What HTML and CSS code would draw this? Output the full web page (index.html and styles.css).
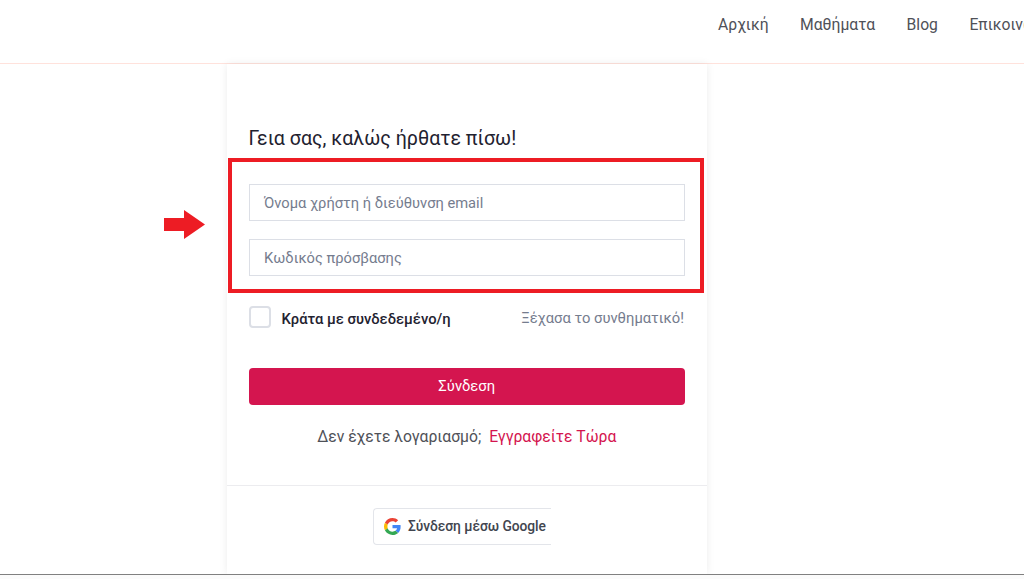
FILE: index.html
```html
<!DOCTYPE html>
<html lang="el">
<head>
<meta charset="utf-8">
<title>Σύνδεση</title>
<link rel="stylesheet" href="styles.css">
</head>
<body>
<header class="topbar">
  <nav class="nav">
    <a class="nav-link">Αρχική</a>
    <a class="nav-link">Μαθήματα</a>
    <a class="nav-link">Blog</a>
    <a class="nav-link">Επικοινωνία</a>
  </nav>
</header>
<main class="stage">
  <section class="card">
    <div class="form-area">
      <h1 class="title">Γεια σας, καλώς ήρθατε πίσω!</h1>
      <div class="fields">
        <div class="field">Όνομα χρήστη ή διεύθυνση email</div>
        <div class="field">Κωδικός πρόσβασης</div>
      </div>
      <div class="options">
        <label class="remember"><span class="check"></span><span class="remember-text">Κράτα με συνδεδεμένο/η</span></label>
        <a class="forgot">Ξέχασα το συνθηματικό!</a>
      </div>
      <div class="submit">Σύνδεση</div>
      <p class="signup">Δεν έχετε λογαριασμό; <a class="signup-link">Εγγραφείτε Τώρα</a></p>
    </div>
    <div class="social">
      <div class="google">
        <svg class="g-icon" viewBox="0 0 48 48" width="17" height="17" aria-hidden="true">
          <path fill="#EA4335" d="M24 9.5c3.5 0 6.7 1.3 9.1 3.5l6.8-6.8C35.800 2.400 30.200 0 24 0 14.600 0 6.500 5.400 2.600 13.200l7.900 6.200C12.400 13.600 17.700 9.500 24 9.500z"/>
          <path fill="#4285F4" d="M46.900 24.500c0-1.600-.1-3.100-.4-4.500H24v9h12.900c-.6 3-2.200 5.500-4.700 7.200l7.700 6c4.500-4.200 7-10.300 7-17.700z"/>
          <path fill="#FBBC05" d="M10.500 28.600c-.5-1.400-.8-3-.8-4.600s.3-3.200.8-4.600l-7.900-6.200C.9 16.500 0 20.100 0 24s.9 7.500 2.600 10.800l7.900-6.200z"/>
          <path fill="#34A853" d="M24 48c6.500 0 11.900-2.100 15.900-5.800l-7.700-6c-2.200 1.400-4.900 2.300-8.200 2.300-6.300 0-11.600-4.100-13.500-9.900l-7.900 6.200C6.500 42.600 14.600 48 24 48z"/>
        </svg>
        <span>Σύνδεση μέσω Google</span>
      </div>
    </div>
  </section>
</main>
<footer class="edge"></footer>
<div class="highlight"></div>
<svg class="arrow" viewBox="0 0 41 29" width="41" height="29" aria-hidden="true">
  <path fill="#ed1c24" d="M0 8H20V0L41 14.500 20 29V21H0Z"/>
</svg>
</body>
</html>
```
FILE: styles.css
```css
* { box-sizing: border-box; }
html, body { margin: 0; height: 100%; }
body {
  width: 1024px;
  height: 579px;
  overflow: hidden;
  position: relative;
  background: #fff;
  font-family: Roboto, "Noto Sans", sans-serif;
  display: flex;
  flex-direction: column;
}
.topbar {
  height: 64px;
  flex: none;
  border-bottom: 1px solid #ffe2dc;
  overflow: hidden;
}
.nav {
  display: flex;
  gap: 31.500px;
  padding: 14.500px 0 0 718px;
  width: 1200px;
}
.nav-link {
  font-size: 15.700px;
  line-height: 20px;
  color: #4f5158;
  white-space: nowrap;
}
.stage {
  flex: 1;
  min-height: 0;
  padding-left: 227px;
}
.card {
  width: 480px;
  height: 100%;
  background: #fff;
  box-shadow: 0 0 8px rgba(0, 0, 0, .08);
  display: flex;
  flex-direction: column;
}
.form-area {
  height: 422px;
  flex: none;
  padding: 61.500px 22px 0 21.500px;
  border-bottom: 1px solid #ececef;
}
.title {
  margin: 0;
  font-size: 19.600px;
  line-height: 26px;
  font-weight: 400;
  color: #1f2230;
}
.fields {
  margin-top: 32.500px;
  display: flex;
  flex-direction: column;
  gap: 18px;
}
.field {
  height: 37px;
  border: 1px solid #dcdfe6;
  padding: 0 14.500px;
  font-size: 14.700px;
  line-height: 36px;
  color: #757c8e;
}
.options {
  margin-top: 30px;
  height: 22px;
  display: flex;
  justify-content: space-between;
  align-items: center;
  padding-right: 1px;
}
.remember {
  display: flex;
  align-items: center;
  gap: 11px;
  font-size: 14.750px;
  font-weight: 500;
  color: #1f2230;
}
.remember-text { padding-top: 4px; }
.check {
  width: 22px;
  height: 22px;
  border: 2px solid #dcdfe6;
  border-radius: 4px;
}
.forgot {
  font-size: 14.750px;
  padding-top: 1px;
  color: #757c8e;
}
.submit {
  margin-top: 40px;
  height: 37px;
  background: #d4154f;
  border-radius: 4px;
  color: #fff;
  font-size: 14.800px;
  line-height: 37px;
  text-align: center;
}
.signup {
  margin: 22px 0 0;
  text-align: center;
  font-size: 15.700px;
  line-height: 20px;
  color: #4f5158;
}
.signup-link {
  color: #d4154f;
  margin-left: 4px;
}
.social {
  padding: 22px 0 0 146px;
}
.google {
  width: 178px;
  height: 37px;
  border: 1px solid #e3e5ea;
  border-right: 0;
  border-radius: 4px 0 0 4px;
  display: flex;
  align-items: center;
  gap: 7px;
  padding: 0 0 2px 10px;
  font-size: 13.800px;
  font-weight: 500;
  letter-spacing: -0.05px;
  color: #41454f;
  white-space: nowrap;
  overflow: hidden;
}
.g-icon { flex: none; margin-top: 2px; }
.edge {
  height: 5px;
  flex: none;
  background: #fbfbfb;
  border-top: 1px solid #808080;
  position: relative;
}
.highlight {
  position: absolute;
  left: 228px;
  top: 158px;
  width: 476px;
  height: 135px;
  border: 4px solid #ed1c24;
}
.arrow {
  position: absolute;
  left: 164px;
  top: 210px;
}
```
